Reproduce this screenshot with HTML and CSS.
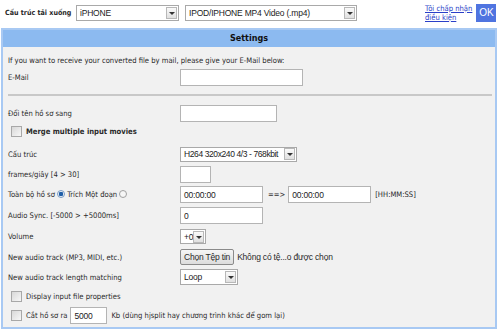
FILE: index.html
```html
<!DOCTYPE html>
<html lang="vi">
<head>
    <meta charset="UTF-8">
    <title>Chuyển đổi video</title>
    <link rel="stylesheet" href="styles.css">
</head>
<body>
    <div class="topbar">
        <span class="top-label">Cấu trúc tải xuống</span>
        <div class="sel sel-device"><span>iPHONE</span><span class="arr"></span></div>
        <div class="sel sel-format"><span>IPOD/IPHONE MP4 Video (.mp4)</span><span class="arr"></span></div>
        <a class="terms" href="#">Tôi chấp nhận<br>điều kiện</a>
        <button class="ok">OK</button>
    </div>

    <div class="panel">
        <div class="panel-head">Settings</div>
        <div class="panel-body">
            <p class="intro">If you want to receive your converted file by mail, please give your E-Mail below:</p>
            <div class="row">
                <label>E-Mail</label>
                <span class="inp w-mail"></span>
            </div>
            <hr>
            <div class="row">
                <label>Đổi tên hồ sơ sang</label>
                <span class="inp w-name"></span>
            </div>
            <div class="check-row bold merge">
                <span class="cb"></span>Merge multiple input movies
            </div>
            <div class="row h20 codec-row">
                <label>Cấu trúc</label>
                <div class="sel sel-codec"><span>H264 320x240 4/3 - 768kbit</span><span class="arr"></span></div>
            </div>
            <div class="row h20">
                <label>frames/giây [4 &gt; 30]</label>
                <span class="inp w-fps"></span>
            </div>
            <div class="row">
                <label>Toàn bộ hồ sơ <span class="radio on"></span> Trích Một đoạn <span class="radio"></span></label>
                <div class="inline">
                    <span class="inp w-time">00:00:00</span>
                    <span class="arrow-txt">==&gt;</span>
                    <span class="inp w-time">00:00:00</span>
                    <span class="hint">[HH:MM:SS]</span>
                </div>
            </div>
            <div class="row">
                <label>Audio Sync. [-5000 &gt; +5000ms]</label>
                <span class="inp w-time">0</span>
            </div>
            <div class="row">
                <label>Volume</label>
                <div class="sel sel-vol"><span>+0</span><span class="arr"></span></div>
            </div>
            <div class="row h20">
                <label>New audio track (MP3, MIDI, etc.)</label>
                <div class="inline">
                    <span class="btn">Chọn Tệp tin</span>
                    <span class="file-txt">Không có tệ...o được chọn</span>
                </div>
            </div>
            <div class="row h20">
                <label>New audio track length matching</label>
                <div class="sel sel-loop"><span>Loop</span><span class="arr"></span></div>
            </div>
            <div class="check-row">
                <span class="cb"></span>Display input file properties
            </div>
            <div class="check-row">
                <span class="cb"></span>Cắt hồ sơ ra <span class="inp w-kb">5000</span> Kb (dùng hjsplit hay chương trình khác để gom lại)
            </div>
        </div>
    </div>
</body>
</html>
```

FILE: styles.css
```css
* {
    box-sizing: border-box;
    margin: 0;
    padding: 0;
}

body {
    width: 500px;
    height: 333px;
    background: #ffffff;
    font-family: "DejaVu Sans Condensed", "DejaVu Sans", sans-serif;
    font-size: 7.6px;
    color: #2a2a2a;
    overflow: hidden;
}

/* top bar */
.topbar {
    display: flex;
    align-items: center;
    height: 26px;
    padding: 0 5px 1px 5px;
}

.top-label {
    flex-shrink: 0;
    white-space: nowrap;
    font-weight: bold;
    font-size: 7.1px;
    width: 71px;
}

.sel {
    display: flex;
    flex-shrink: 0;
    align-items: center;
    justify-content: space-between;
    background: #fff;
    border: 1px solid #a9a9a9;
    height: 16px;
    padding-left: 3px;
    white-space: nowrap;
    font-family: "Liberation Sans", Arial, sans-serif;
    font-size: 8.5px;
    letter-spacing: -0.2px;
    color: #222;
}

.arr {
    flex-shrink: 0;
    width: 11px;
    height: 12px;
    margin-right: 1px;
    border: 1px solid #b8b8b8;
    background: linear-gradient(#fafafa, #e0e0e0);
    position: relative;
}

.arr::after {
    content: "";
    position: absolute;
    left: 2px;
    top: 4px;
    border-left: 3px solid transparent;
    border-right: 3px solid transparent;
    border-top: 3px solid #333;
}

.sel-device {
    width: 103px;
}

.sel-format {
    width: 172px;
    margin-left: 6px;
}

.terms {
    flex-shrink: 0;
    white-space: nowrap;
    margin-left: 68px;
    color: #2a3fc8;
    line-height: 9px;
    text-decoration: underline;
}

.ok {
    flex-shrink: 0;
    margin-left: 4px;
    width: 20px;
    height: 18px;
    border: none;
    background: #4f74e0;
    color: #fff;
    font-family: "Liberation Sans", Arial, sans-serif;
    font-size: 10px;
}

/* settings panel */
.panel {
    margin: 2px 3px 0 1px;
    border: 2px solid #a8c9f3;
    background: #f1f1f1;
    height: 301px;
}

.panel-head {
    background: #8cbaf0;
    height: 17px;
    line-height: 17px;
    text-align: center;
    font-weight: bold;
    font-size: 9px;
    color: #111;
}

.panel-body {
    padding: 8px 0 0 5px;
}

.intro {
    height: 11px;
    line-height: 11px;
    margin-bottom: 1px;
}

.row {
    display: grid;
    grid-template-columns: 172px 1fr;
    align-items: center;
    height: 21px;
}

.h20 {
    height: 20px;
}

.codec-row {
    margin-top: 5px;
}

.inline {
    display: flex;
    align-items: center;
}

.inp {
    display: inline-flex;
    align-items: center;
    background: #fff;
    border: 1px solid #b4b4b4;
    height: 17px;
    padding-left: 3px;
    font-family: "Liberation Sans", Arial, sans-serif;
    font-size: 8.5px;
    letter-spacing: -0.2px;
    color: #222;
}

.w-mail {
    width: 123px;
}

.w-name {
    width: 97px;
}

.w-fps {
    width: 31px;
}

.w-time {
    width: 83px;
}

.w-kb {
    width: 37px;
    margin: 0 4px 0 3px;
}

.arrow-txt {
    margin: 0 3px 0 5px;
    color: #333;
}

.hint {
    margin-left: 4px;
}

.sel-codec {
    width: 117px;
    height: 15px;
    letter-spacing: -0.4px;
}

.sel-vol {
    width: 26px;
    height: 15px;
}

.sel-loop {
    width: 58px;
}

.btn {
    display: inline-flex;
    align-items: center;
    height: 16px;
    padding: 0 3px;
    border: 1px solid #8a8a8a;
    border-radius: 2px;
    background: linear-gradient(#f6f6f6, #dcdcdc);
    font-family: "Liberation Sans", Arial, sans-serif;
    font-size: 8.5px;
    letter-spacing: -0.2px;
}

.file-txt {
    margin-left: 3px;
    font-family: "Liberation Sans", Arial, sans-serif;
    font-size: 8.5px;
    letter-spacing: -0.2px;
}

hr {
    border: none;
    border-top: 2px solid #c8c8c8;
    margin: 6px 3px 7px 0;
}

.check-row {
    display: flex;
    align-items: center;
    height: 19px;
    padding-left: 3px;
}

.merge {
    height: 15px;
}

.bold {
    font-weight: bold;
}

.cb {
    display: inline-block;
    width: 11px;
    height: 11px;
    margin-right: 4px;
    border: 1px solid #a8a8a8;
    background: linear-gradient(135deg, #d8d8d8, #f7f7f7);
}

.radio {
    display: inline-block;
    width: 8px;
    height: 8px;
    border-radius: 50%;
    border: 1px solid #a0a0a0;
    background: #f6f6f6;
    vertical-align: -1px;
}

.radio.on {
    background: radial-gradient(circle, #1f5fa8 0 2px, #e8eef6 2.5px);
    border-color: #7a9cc4;
}
```
